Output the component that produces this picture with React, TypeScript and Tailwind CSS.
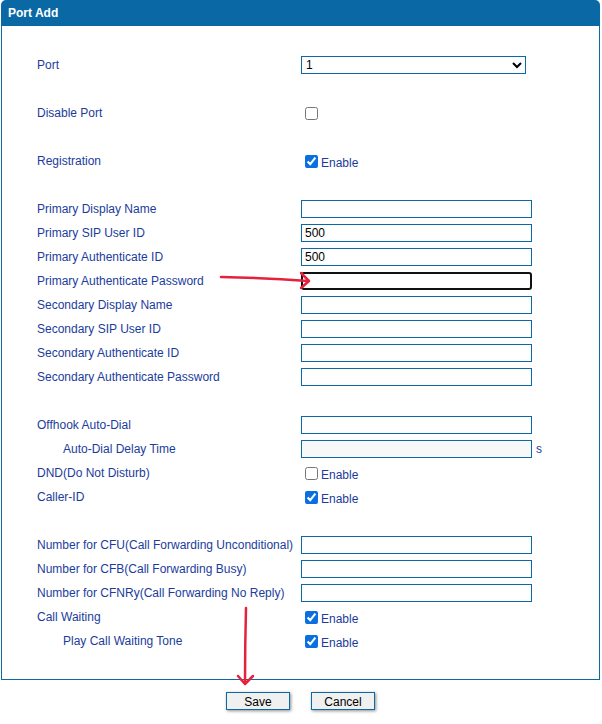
import React from 'react'

const label = 'text-[12px] text-[#1b3c9c]'
const box = 'h-[18px] w-[231px] border border-[#0a6aa6] px-[3px] text-[12px] text-black outline-none'

function Row({ name, indent, children }: { name: string; indent?: boolean; children?: React.ReactNode }) {
  return (
    <div className="flex h-6 items-center">
      <div className={`w-[264px] shrink-0 ${label} ${indent ? 'pl-[26px]' : ''}`}>{name}</div>
      <div className="flex items-center">{children}</div>
    </div>
  )
}

function Blank() {
  return <div className="h-6" />
}

function Check({ on, text }: { on?: boolean; text?: string }) {
  return (
    <label className="flex items-center">
      <input type="checkbox" defaultChecked={on} className="ml-1 mr-[3px] size-[13px] accent-[#0b6fe0]" />
      {text && <span className={`${label} mt-[4px]`}>{text}</span>}
    </label>
  )
}

export default function App() {
  return (
    <div className="relative h-[724px] w-[602px] bg-white font-['Liberation_Sans',Arial,sans-serif]">
      <div className="ml-px w-[599px]">
        <div className="flex h-[26px] items-center rounded-t-[5px] bg-[#0a69a5] pl-[7px] text-[12px] font-bold text-white">
          Port Add
        </div>
        <div className="border-x border-b border-[#0a6aa6] pl-[35px] pt-[27px] pb-[26px]">
          <Row name="Port">
            <select className="h-[18px] w-[225px] border border-[#0a6aa6] text-[12px] text-black outline-none">
              <option>1</option>
            </select>
          </Row>
          <Blank />
          <Row name="Disable Port">
            <Check />
          </Row>
          <Blank />
          <Row name="Registration">
            <Check on text="Enable" />
          </Row>
          <Blank />
          <Row name="Primary Display Name">
            <input className={box} />
          </Row>
          <Row name="Primary SIP User ID">
            <input className={box} defaultValue="500" />
          </Row>
          <Row name="Primary Authenticate ID">
            <input className={box} defaultValue="500" />
          </Row>
          <Row name="Primary Authenticate Password">
            <input
              type="password"
              className="h-[18px] w-[231px] rounded-[3px] border-2 border-[#111] px-[2px] text-[12px] outline-none"
            />
          </Row>
          <Row name="Secondary Display Name">
            <input className={box} />
          </Row>
          <Row name="Secondary SIP User ID">
            <input className={box} />
          </Row>
          <Row name="Secondary Authenticate ID">
            <input className={box} />
          </Row>
          <Row name="Secondary Authenticate Password">
            <input type="password" className={box} />
          </Row>
          <Blank />
          <Row name="Offhook Auto-Dial">
            <input className={box} />
          </Row>
          <Row name="Auto-Dial Delay Time" indent>
            <input className={`${box} w-[230px] bg-[#f8f8f8]`} />
            <span className={`${label} ml-[4px]`}>s</span>
          </Row>
          <Row name="DND(Do Not Disturb)">
            <Check text="Enable" />
          </Row>
          <Row name="Caller-ID">
            <Check on text="Enable" />
          </Row>
          <Blank />
          <Row name="Number for CFU(Call Forwarding Unconditional)">
            <input className={box} />
          </Row>
          <Row name="Number for CFB(Call Forwarding Busy)">
            <input className={box} />
          </Row>
          <Row name="Number for CFNRy(Call Forwarding No Reply)">
            <input className={box} />
          </Row>
          <Row name="Call Waiting">
            <Check on text="Enable" />
          </Row>
          <Row name="Play Call Waiting Tone" indent>
            <Check on text="Enable" />
          </Row>
        </div>
        <div className="mt-[12px] flex gap-[21px] pl-[225px]">
          <button className="h-[18px] w-[64px] border border-[#0a6aa6] bg-[#f0f0f0] text-[12px] text-black shadow-[1px_1px_3px_rgba(0,0,0,0.45)]">
            Save
          </button>
          <button className="h-[18px] w-[64px] border border-[#0a6aa6] bg-[#f0f0f0] text-[12px] text-black shadow-[1px_1px_3px_rgba(0,0,0,0.45)]">
            Cancel
          </button>
        </div>
      </div>

      <svg className="pointer-events-none absolute inset-0" width="602" height="724" viewBox="0 0 602 724">
        <g fill="none" stroke="#e5213b" strokeWidth="2.5" strokeLinecap="round" strokeLinejoin="round">
          <path d="M221 277 Q265 278 308 281" />
          <path d="M301 273 L309 281 L301 288" />
          <path d="M246 608 Q245 645 245 683" />
          <path d="M238 676 L245 684 L253 676" />
        </g>
      </svg>
    </div>
  )
}
